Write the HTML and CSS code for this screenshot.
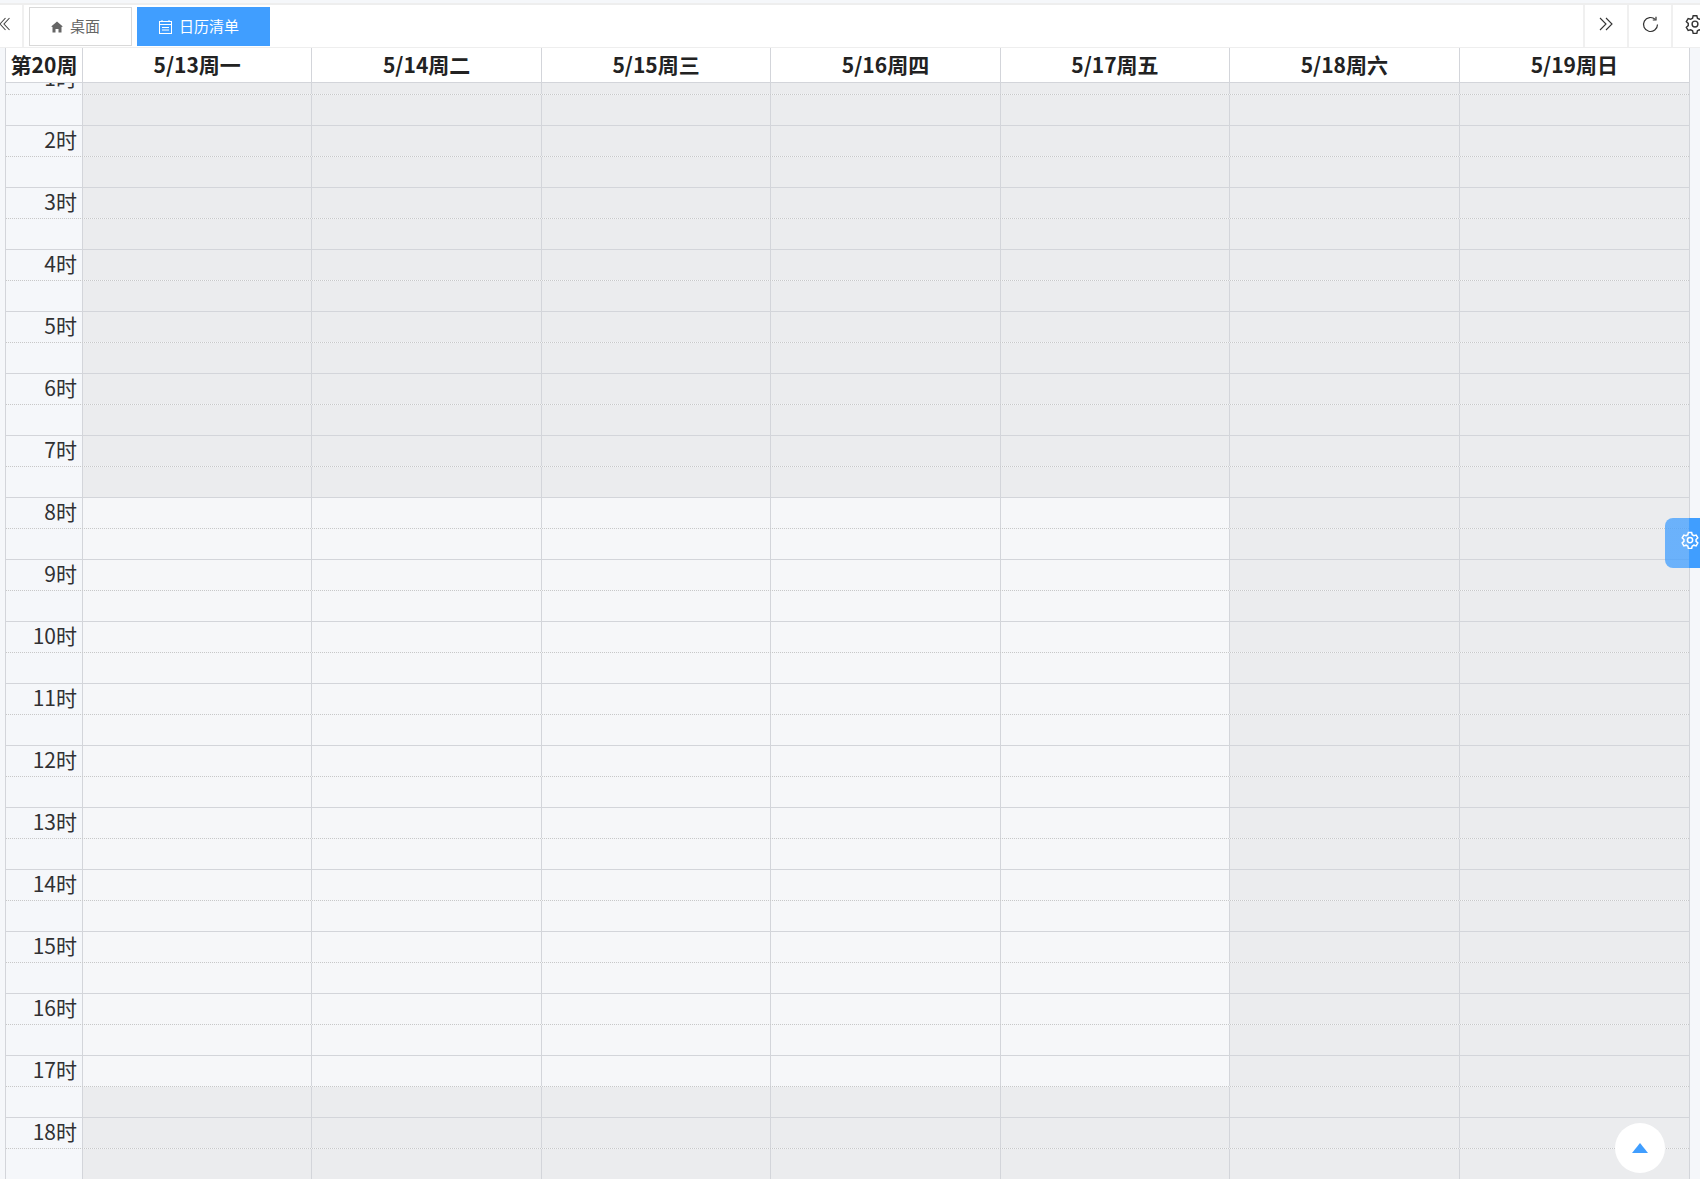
FILE: index.html
```html
<!DOCTYPE html>
<html lang="zh-CN">
<head>
    <meta charset="UTF-8">
    <title>日历清单</title>
    <link rel="stylesheet" href="styles.css">
</head>
<body>
    <div class="tab-bar">
        <div class="tab-btn tab-btn-left">
            <svg width="10" height="14" viewBox="0 0 10 14" fill="none" stroke="#444" stroke-width="1.1"><path d="M5.5 1 0 7l5.5 6M9.5 1 4 7l5.5 6"/></svg>
        </div>
        <div class="tabs">
            <div class="tab">
                <svg width="12" height="12" viewBox="0 0 12 12" fill="#666"><path d="M6 .5 .2 5.500 1.500 6v5.500h3V8h3v3.500h3V6l1.300-.5z"/></svg>
                <span>桌面</span>
            </div>
            <div class="tab tab-active">
                <svg width="13" height="14" viewBox="0 0 13 14" fill="none" stroke="#fff" stroke-width="1"><rect x=".5" y="1.500" width="12" height="12"/><path d="M3 0v2M10 0v2M.5 4.500h12M3 7.500h7M3 10h7"/></svg>
                <span>日历清单</span>
            </div>
        </div>
        <div class="tab-btn">
            <svg width="14" height="14" viewBox="0 0 14 14" fill="none" stroke="#333" stroke-width="1.100"><path d="M1 1l6 6-6 6M7 1l6 6-6 6"/></svg>
        </div>
        <div class="tab-btn">
            <svg width="17" height="17" viewBox="0 0 17 17" fill="none" stroke="#333" stroke-width="1.200"><path d="M15.500 8.500a7 7 0 1 1-2.200-5.100"/><path d="M14 .8v3.200h-3.200"/></svg>
        </div>
        <div class="tab-btn tab-btn-gear">
            <svg class="gear" width="20" height="20" viewBox="0 0 24 24" fill="none" stroke="#333" stroke-width="1.700"><circle cx="12" cy="12" r="3.500"/><path d="M9.800 2h4.400l.7 3 2.300 1.300 3-.9 2.200 3.800-2.300 2.100v2.600l2.300 2.100-2.200 3.800-3-.9-2.300 1.300-.7 3H9.800l-.7-3-2.300-1.300-3 .9-2.200-3.800 2.300-2.100v-2.600L1.600 9.200l2.200-3.800 3 .9 2.300-1.300z"/></svg>
        </div>
    </div>

    <div class="calendar">
        <div class="week-head">
            <div class="head-cell">第20周</div>
            <div class="head-cell">5/13周一</div>
            <div class="head-cell">5/14周二</div>
            <div class="head-cell">5/15周三</div>
            <div class="head-cell">5/16周四</div>
            <div class="head-cell">5/17周五</div>
            <div class="head-cell">5/18周六</div>
            <div class="head-cell">5/19周日</div>
        </div>
        <div class="week-scroll">
            <div id="week-body" class="week-body"></div>
        </div>
    </div>

    <div class="setting-tab">
        <svg width="18" height="18" viewBox="0 0 24 24" fill="none" stroke="#fff" stroke-width="2"><circle cx="12" cy="12" r="3.500"/><path d="M9.800 2h4.400l.7 3 2.300 1.300 3-.9 2.200 3.800-2.300 2.100v2.600l2.300 2.100-2.200 3.800-3-.9-2.300 1.300-.7 3H9.800l-.7-3-2.300-1.300-3 .9-2.200-3.800 2.300-2.100v-2.600L1.600 9.200l2.200-3.800 3 .9 2.300-1.300z"/></svg>
    </div>
    <div class="back-top"><span class="back-top-arrow"></span></div>

    <script src="script.js"></script>
</body>
</html>
```

FILE: styles.css
```css
* {
    box-sizing: border-box;
}

html, body {
    height: 100%;
}

body {
    margin: 0;
    overflow: hidden;
    background-color: #f5f7fa;
    font-family: "Noto Sans CJK SC", "Noto Sans", sans-serif;
    color: #222222;
}

.tab-bar {
    display: flex;
    align-items: stretch;
    height: 45px;
    margin-top: 3px;
    background: white;
    border-top: 2px solid #eeeeee;
    border-bottom: 1px solid #eeeeee;
}

.tab-btn {
    width: 44px;
    display: flex;
    align-items: center;
    justify-content: center;
    padding-bottom: 4px;
    border-left: 2px solid #f0f0f0;
}

.tab-btn-left {
    width: 24px;
    justify-content: flex-start;
    border-left: 0;
    border-right: 2px solid #f0f0f0;
}

.tab-btn-gear {
    width: 29px;
    justify-content: flex-start;
    padding-left: 12px;
    overflow: hidden;
}

.gear {
    flex-shrink: 0;
}

.tabs {
    flex: 1;
    display: flex;
    align-items: center;
    gap: 5px;
    padding: 1px 5px 0;
}

.tab {
    display: flex;
    align-items: center;
    gap: 7px;
    width: 103px;
    height: 39px;
    padding-left: 21px;
    border: 1px solid #d9d9d9;
    font-size: 15px;
    color: #666;
}

.tab span {
    margin-bottom: 2px;
}

.tab-active {
    width: 133px;
    border-color: #409eff;
    background-color: #409eff;
    color: white;
}

.calendar {
    margin-left: 5px;
    width: 1685px;
    height: 1131px;
    border-left: 1px solid #d3d5da;
    border-right: 1px solid #d3d5da;
    display: flex;
    flex-direction: column;
}

.week-head, .half-row {
    display: grid;
    grid-template-columns: 77px repeat(7, 1fr);
}

.week-head {
    height: 35px;
    flex-shrink: 0;
    position: relative;
    z-index: 1;
    background: white;
    border-bottom: 1px solid #d3d5da;
}

.head-cell {
    display: flex;
    align-items: center;
    justify-content: center;
    padding-bottom: 2px;
    font-size: 21px;
    font-weight: bold;
    line-height: 33px;
    border-right: 1px solid #d3d5da;
}

.head-cell:last-child {
    border-right: 0;
}

.week-scroll {
    flex: 1;
    overflow: hidden;
}

.week-body {
    margin-top: -19px;
}

.half-row {
    height: 31px;
    border-bottom: 1px dotted #c8c8c8;
}

.half-row-end {
    border-bottom: 1px solid #d3d5da;
}

.time-cell {
    text-align: right;
    padding-right: 5px;
    font-size: 21px;
    line-height: 27px;
    color: #303133;
    background-color: #f5f7fa;
    border-right: 1px solid #d3d5da;
}

.slot {
    background-color: #f6f7f9;
    border-right: 1px solid #d3d5da;
}

.slot:last-child {
    border-right: 0;
}

.slot-off {
    background-color: #ebecee;
}

.setting-tab {
    position: absolute;
    left: 1665px;
    top: 518px;
    width: 35px;
    height: 50px;
    display: flex;
    align-items: center;
    justify-content: flex-end;
    padding: 0 1px 6px 0;
    border-radius: 8px 0 0 8px;
    background: linear-gradient(to right, rgba(64, 158, 255, 0.75) 24px, #409eff 24px);
}

.back-top {
    position: absolute;
    left: 1615px;
    top: 1123px;
    width: 50px;
    height: 50px;
    display: flex;
    align-items: center;
    justify-content: center;
    border-radius: 50%;
    background: white;
}

.back-top-arrow {
    width: 0;
    height: 0;
    border-left: 8px solid transparent;
    border-right: 8px solid transparent;
    border-bottom: 10px solid #409eff;
}
```

FILE: script.js
```js
const DAYS = 7;
const weekBody = document.getElementById('week-body');

// weekdays are open from 8:00 to 17:30, weekends not at all
function isOff(day, hour, half) {
    if (day >= 5) return true;
    const t = hour + half * 0.5;
    return t < 8 || t >= 17.5;
}

function buildRow(hour, half) {
    let cells = `<div class="time-cell">${half === 0 ? hour + '时' : ''}</div>`;
    for (let day = 0; day < DAYS; day++) {
        cells += `<div class="slot${isOff(day, hour, half) ? ' slot-off' : ''}"></div>`;
    }
    return `<div class="half-row${half === 1 ? ' half-row-end' : ''}">${cells}</div>`;
}

let html = '';
for (let hour = 1; hour <= 18; hour++) {
    html += buildRow(hour, 0) + buildRow(hour, 1);
}
weekBody.innerHTML = html;
```
